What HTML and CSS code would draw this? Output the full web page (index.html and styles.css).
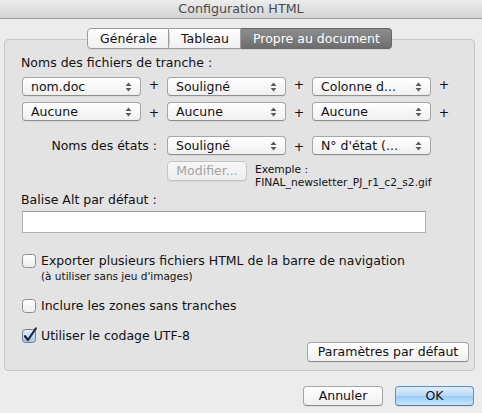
FILE: index.html
```html
<!DOCTYPE html>
<html lang="fr">
<head>
<meta charset="utf-8">
<title>Configuration HTML</title>
<link rel="stylesheet" href="styles.css">
</head>
<body>
<div class="titlebar">Configuration HTML</div>
<div class="main">
  <div class="tabs">
    <div class="tab first">Générale</div>
    <div class="tab second">Tableau</div>
    <div class="tab selected">Propre au document</div>
  </div>
  <div class="group">
    <div class="label">Noms des fichiers de tranche :</div>
    <div class="row r1">
      <div class="popup"><span>nom.doc</span><svg class="arrows" width="7" height="10" viewBox="0 0 7 10"><polygon points="0.5,4 3.5,0.5 6.5,4"/><polygon points="0.5,6 3.5,9.5 6.5,6"/></svg></div>
      <div class="plus">+</div>
      <div class="popup"><span>Souligné</span><svg class="arrows" width="7" height="10" viewBox="0 0 7 10"><polygon points="0.5,4 3.5,0.5 6.5,4"/><polygon points="0.5,6 3.5,9.5 6.5,6"/></svg></div>
      <div class="plus">+</div>
      <div class="popup"><span>Colonne d...</span><svg class="arrows" width="7" height="10" viewBox="0 0 7 10"><polygon points="0.5,4 3.5,0.5 6.5,4"/><polygon points="0.5,6 3.5,9.5 6.5,6"/></svg></div>
      <div class="plus">+</div>
    </div>
    <div class="row r2">
      <div class="popup"><span>Aucune</span><svg class="arrows" width="7" height="10" viewBox="0 0 7 10"><polygon points="0.5,4 3.5,0.5 6.5,4"/><polygon points="0.5,6 3.5,9.5 6.5,6"/></svg></div>
      <div class="plus low">+</div>
      <div class="popup"><span>Aucune</span><svg class="arrows" width="7" height="10" viewBox="0 0 7 10"><polygon points="0.5,4 3.5,0.5 6.5,4"/><polygon points="0.5,6 3.5,9.5 6.5,6"/></svg></div>
      <div class="plus low">+</div>
      <div class="popup"><span>Aucune</span><svg class="arrows" width="7" height="10" viewBox="0 0 7 10"><polygon points="0.5,4 3.5,0.5 6.5,4"/><polygon points="0.5,6 3.5,9.5 6.5,6"/></svg></div>
      <div class="plus low">+</div>
    </div>
    <div class="row r3">
      <div class="state-label">Noms des états :</div>
      <div class="popup"><span>Souligné</span><svg class="arrows" width="7" height="10" viewBox="0 0 7 10"><polygon points="0.5,4 3.5,0.5 6.5,4"/><polygon points="0.5,6 3.5,9.5 6.5,6"/></svg></div>
      <div class="plus low">+</div>
      <div class="popup"><span>N° d'état (...</span><svg class="arrows" width="7" height="10" viewBox="0 0 7 10"><polygon points="0.5,4 3.5,0.5 6.5,4"/><polygon points="0.5,6 3.5,9.5 6.5,6"/></svg></div>
    </div>
    <div class="r4">
      <div class="btn disabled modify">Modifier...</div>
      <div class="example">Exemple :<br>FINAL_newsletter_PJ_r1_c2_s2.gif</div>
    </div>
    <div class="label alt-label">Balise Alt par défaut :</div>
    <div class="textfield"></div>
    <div class="check-row c1">
      <svg class="checkbox" width="14" height="14" viewBox="0 0 14 14"><defs><linearGradient id="g1" x1="0" y1="0" x2="0" y2="1"><stop offset="0" stop-color="#ffffff"/><stop offset="1" stop-color="#ececec"/></linearGradient></defs><rect x="0.5" y="0.5" width="13" height="13" rx="3" fill="url(#g1)" stroke="#8e8e8e"/></svg>
      <span>Exporter plusieurs fichiers HTML de la barre de navigation</span>
    </div>
    <div class="sub">(à utiliser sans jeu d'images)</div>
    <div class="check-row c2">
      <svg class="checkbox" width="14" height="14" viewBox="0 0 14 14"><rect x="0.5" y="0.5" width="13" height="13" rx="3" fill="url(#g1)" stroke="#8e8e8e"/></svg>
      <span>Inclure les zones sans tranches</span>
    </div>
    <div class="check-row c3">
      <svg class="checkbox" width="14" height="14" viewBox="0 0 14 14" overflow="visible"><defs><linearGradient id="g2" x1="0" y1="0" x2="0" y2="1"><stop offset="0" stop-color="#e6f0fb"/><stop offset="1" stop-color="#a7c4e8"/></linearGradient></defs><rect x="0.5" y="0.5" width="13" height="13" rx="3" fill="url(#g2)" stroke="#6b7c98"/><path d="M3 7.2 L6 11 L13.8 -0.5" fill="none" stroke="#1c2436" stroke-width="2.2" stroke-linecap="round" stroke-linejoin="round"/></svg>
      <span>Utiliser le codage UTF-8</span>
    </div>
    <div class="defaults-row">
      <div class="btn defaults">Paramètres par défaut</div>
    </div>
  </div>
  <div class="footer">
    <div class="btn cancel">Annuler</div>
    <div class="btn ok">OK</div>
  </div>
</div>
</body>
</html>
```

FILE: styles.css
```css
* { box-sizing: border-box; }
html, body { margin: 0; padding: 0; }
body {
  width: 482px;
  height: 413px;
  overflow: hidden;
  background: #ececec;
  font-family: "DejaVu Sans", sans-serif;
  font-size: 12.5px;
  color: #111;
}
.titlebar {
  height: 19px;
  background: linear-gradient(#ededed, #d3d3d3);
  border-bottom: 1px solid #9a9a9a;
  text-align: center;
  font-size: 12.7px;
  line-height: 18px;
  color: #4a4a4a;
}
.main { padding: 9px 7px 0 4px; }
.tabs {
  display: flex;
  justify-content: center;
  position: relative;
  z-index: 1;
  height: 21px;
}
.tab {
  height: 21px;
  padding: 0 11px 0 12px;
  line-height: 19px;
  border: 1px solid #9c9c9c;
  border-left: none;
  background: linear-gradient(#fefefe, #f0f0f0);
  box-shadow: 0 1px 0 rgba(0,0,0,0.06);
}
.tab.first {
  border-left: 1px solid #9c9c9c;
  border-radius: 4px 0 0 4px;
}
.tab.second {
  background: linear-gradient(#d2d2d2, #d2d2d2) left center / 1px 13px no-repeat, linear-gradient(#fefefe, #f0f0f0);
}
.tab.selected {
  background: linear-gradient(#8e8e8e, #6d6d6d);
  color: #fff;
  border-color: #676767;
  border-radius: 0 4px 4px 0;
}
.group {
  margin-top: -10px;
  height: 332px;
  border: 1px solid #c6c6c6;
  border-radius: 4px;
  background: #e3e3e3;
  padding: 15px 5px 0 16px;
}
.label { line-height: 16px; }
.row {
  display: grid;
  grid-template-columns: 119px 26px 119px 26px 119px 26px;
  margin-left: 1px;
  height: 19px;
}
.r1, .r2 { margin-top: 6px; }
.r3 { margin-top: 15px; }
.r4 {
  display: flex;
  align-items: flex-start;
  gap: 8px;
  margin-top: 6px;
  margin-left: 1px;
  padding-left: 145px;
  height: 28px;
}
.popup {
  height: 19px;
  display: flex;
  align-items: center;
  justify-content: space-between;
  padding: 0 8px 0 8px;
  border: 1px solid #a6a6a6;
  border-bottom-color: #8f8f8f;
  border-radius: 4px;
  background: linear-gradient(#ffffff, #f0f0f0);
  box-shadow: 0 1px 0 rgba(0,0,0,0.05);
  white-space: nowrap;
  line-height: 16px;
}
.arrows { fill: #5c5c5c; flex: none; }
.plus { text-align: center; line-height: 16px; }
.plus.low { margin-top: 3px; }
.state-label {
  grid-column: 1 / span 2;
  text-align: right;
  padding-right: 10px;
  line-height: 19px;
}
.modify { width: 80px; flex: none; }
.example {
  margin-top: 2px;
  font-size: 10.7px;
  line-height: 13px;
  white-space: nowrap;
}
.btn {
  height: 20px;
  display: flex;
  align-items: center;
  justify-content: center;
  border: 1px solid #a5a5a5;
  border-bottom-color: #8c8c8c;
  border-radius: 4px;
  background: linear-gradient(#ffffff, #f0f0f0);
  box-shadow: 0 1px 0 rgba(0,0,0,0.05);
  line-height: 16px;
  white-space: nowrap;
}
.btn.disabled {
  color: #a3a3a3;
  border-color: #c4c4c4;
  background: linear-gradient(#f7f7f7, #eeeeee);
}
.alt-label { margin-top: 3px; }
.textfield {
  margin-top: 3px;
  margin-left: 1px;
  width: 404px;
  height: 22px;
  background: #fff;
  border: 1px solid #b1b1b1;
  border-top-color: #9a9a9a;
}
.check-row {
  display: flex;
  align-items: center;
  gap: 5px;
  margin-left: 1px;
  line-height: 16px;
  height: 16px;
}
.checkbox { flex: none; overflow: visible; }
.c1 { margin-top: 20px; }
.c2 { margin-top: 15px; }
.c3 { margin-top: 14px; }
.sub {
  margin-left: 20px;
  font-size: 10.5px;
  line-height: 14px;
}
.defaults-row {
  display: flex;
  justify-content: flex-end;
  margin-top: -2px;
}
.defaults { width: 162px; }
.footer {
  display: flex;
  justify-content: flex-end;
  gap: 12px;
  margin-top: 15px;
  padding-right: 1px;
}
.cancel { width: 80px; }
.ok {
  width: 79px;
  border-color: #6b8fbd;
  border-bottom-color: #5678a6;
  background: linear-gradient(#e1f0fc, #b3d8f7 50%, #98cbf4 51%, #c6e6fd);
}
```
